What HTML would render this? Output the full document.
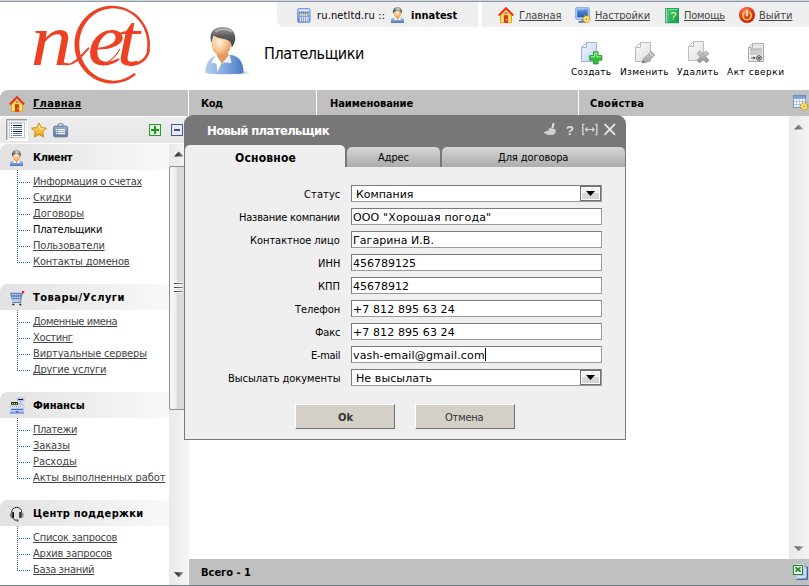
<!DOCTYPE html>
<html lang="ru">
<head>
<meta charset="utf-8">
<title>Плательщики</title>
<style>
*{box-sizing:border-box}
html,body{margin:0;padding:0}
header,nav,aside,main,footer,form,section{display:block;margin:0;padding:0}
body{width:809px;height:586px;overflow:hidden;background:#fff;position:relative;font-family:"DejaVu Sans Condensed","Liberation Sans",sans-serif;font-size:11px;color:#000}
.abs,.t,.ic{position:absolute}
.t{white-space:nowrap;line-height:20px;margin:0;font-weight:normal;text-decoration:none;display:block}
.t.b{font-weight:bold}
.t.v{font-family:"DejaVu Sans","Liberation Sans",sans-serif}
.t.u{text-decoration:underline;text-decoration-thickness:1px;text-underline-offset:1px;text-decoration-skip-ink:none}
.ic{display:block;overflow:visible}
#topline{left:0;top:0;width:809px;height:2px;background:linear-gradient(#c6d4ec 50%,#9a9a9a 50%)}
#topbar{left:277px;top:2px;width:532px;height:25px;background:#efefef;border-radius:0 0 0 7px}
#topgap{left:478px;top:2px;width:4px;height:25px;background:#fff}
#nav{left:0;top:90px;width:809px;height:26px;background:#c0c0c0;border-radius:8px 0 0 0}
.sep{position:absolute;top:90px;width:1px;height:26px;background:#fff}
#ltool{left:0;top:117px;width:189px;height:26px;background:linear-gradient(#eeeeee,#e6e6e6);border-radius:6px 0 0 0}
.sec{position:absolute;left:0;width:169px;height:26px;border-radius:7px 0 0 0;background:linear-gradient(90deg,#e2e2e2,#ededed 50%,#f9f9f9)}
.tree{position:absolute;left:17px;width:1px;background-image:repeating-linear-gradient(#1c5ea8 0 1px,transparent 1px 2px);background-size:1px 100%;background-repeat:no-repeat}
.br{position:absolute;left:19px;width:11px;height:1px;background-image:repeating-linear-gradient(90deg,#1c5ea8 0 1px,transparent 1px 2px)}
#lscroll{left:169px;top:144px;width:20px;height:441px;background:linear-gradient(90deg,#e9e9e9,#f5f5f5)}
#lthumb{left:169px;top:166px;width:18px;height:244px;border:1px solid #8e8e8e;border-radius:2px;background:linear-gradient(90deg,#f8f8f8,#ececec 40%,#d9d9d9 45%,#dcdcdc)}
#rscroll{left:789px;top:116px;width:20px;height:443px;background:linear-gradient(90deg,#e9e9e9,#f3f3f3)}
#foot{left:189px;top:559px;width:620px;height:26px;background:#c0c0c0}
#botline{left:0;top:585px;width:809px;height:1px;background:#6f7c8e}
#dlgtitle{left:184px;top:115px;width:442px;height:52px;background:#777;border-radius:9px 9px 0 0}
#dlgbody{left:184px;top:167px;width:442px;height:273px;background:#efefef;border:1px solid #7a7a7a;border-top:none}
.tab{position:absolute;top:147px;height:20px;border-radius:5px 5px 0 0;background:linear-gradient(#d6d6d6,#acacac)}
.tab.act{top:145px;height:23px;background:#efefef}
.inp{position:absolute;left:351px;width:251px;height:17px;background:#fff;border:1px solid #9a9a9a;border-top-color:#7b7b7b;border-left-color:#7b7b7b}
.sbtn{position:absolute;left:580px;width:21px;height:15px;border:1px solid #707070;box-shadow:inset 0 0 0 1px #fff;background:linear-gradient(#f2f2f2 50%,#d5d5d5 50%)}
.sbtn:after{content:"";position:absolute;left:5px;top:4px;width:9px;height:5px;background:#000;clip-path:polygon(0 0,100% 0,50% 100%)}
.btn{position:absolute;top:404px;width:100px;height:25px;background:#d4d0c8;border:1px solid #fff;border-right-color:#707070;border-bottom-color:#707070}
#caret{left:485px;top:348px;width:1px;height:13px;background:#000}
</style>
</head>
<body>
<div class="abs" id="topline"></div>
<div class="abs" id="topbar"></div>
<div class="abs" id="topgap"></div>
<svg class="ic" style="left:25px;top:0;width:135px;height:90px" viewBox="25 0 135 90" role="img" aria-label="net">
<path fill="#ee4023" d="M136.0,74.8 A37.75,38.85 0 1 1 148.7,54.7 L146.7,51.4 A34.05,36.15 0 1 0 134.2,73.0 Z"/>
<g font-family="'Liberation Serif',serif" font-style="italic" font-size="72" fill="#ee4023">
<text transform="translate(0,64.8) scale(1.16,1.02)" x="26.6 75.4 100.6" y="0">net</text>
<path d="M66,64.5 C73,64 80,56 88.5,47 L89.5,48.5 C82,57 76,65.5 66,65.5Z" stroke="none"/>
<path d="M148.6,50 C147.5,58 141,64.6 130,65" fill="none" stroke="#ee4023" stroke-width="2.6" stroke-linecap="round"/>
<path d="M108,62 C113,59 117,54 120,49" fill="none" stroke="#ee4023" stroke-width="1.1"/>
</g>
</svg>
<svg class="ic" style="left:195px;top:20px;width:65px;height:62px" viewBox="195 20 65 62">
<defs>
<linearGradient id="bu1" x1="0" y1="0" x2="1" y2="0"><stop offset="0" stop-color="#b4cbee"/><stop offset=".5" stop-color="#86a9e0"/><stop offset="1" stop-color="#4a7ac6"/></linearGradient>
<radialGradient id="bu2" cx=".4" cy=".4" r=".7"><stop offset="0" stop-color="#fff0dc"/><stop offset=".5" stop-color="#f8c89a"/><stop offset="1" stop-color="#e08c48"/></radialGradient>
<linearGradient id="bu3" x1="0" y1="0" x2="0" y2="1"><stop offset="0" stop-color="#a0a0a0"/><stop offset=".45" stop-color="#5c5c5c"/><stop offset="1" stop-color="#3a3a3a"/></linearGradient>
<radialGradient id="bu4"><stop offset="0" stop-color="#888" stop-opacity=".7"/><stop offset="1" stop-color="#888" stop-opacity="0"/></radialGradient>
</defs>
<ellipse cx="240" cy="72.5" rx="11" ry="2.5" fill="url(#bu4)"/>
<path d="M205.5,72 C205.5,62 211,56 219,55 L231,55 C239,56 243.5,62 243.5,72 C243.5,73.5 241,74.2 224.5,74.2 C208,74.2 205.5,73.5 205.5,72Z" fill="url(#bu1)"/>
<path d="M217,55 L221.5,64 L229,55 L226,50 L219,50Z" fill="#e59a58"/>
<path d="M216,55 L211,62.5 L216.5,63.5 L217.5,72 L221.5,63 Z" fill="#fff"/>
<path d="M229.5,54.5 L231.5,63 L224,62.5 L221.5,64 Z" fill="#f2f2f2"/>
<ellipse cx="221.3" cy="44.5" rx="9.6" ry="11" fill="url(#bu2)"/>
<path d="M211.6,43 C209,36 211,29 219,27.3 C228,25.5 235.5,30 235.3,38 C235.2,42 233.5,45.5 231.5,47.5 C231.8,43 230,40.5 226,39.5 C221,38.5 216,37.5 213.8,35.5 C212.5,38 212,40.5 211.6,43Z" fill="url(#bu3)"/>
<path d="M216,31.5 C220,28.5 227,28.5 231,31.5" stroke="#c8c8c8" stroke-width="1.6" fill="none" opacity=".7" stroke-linecap="round"/>
</svg>
<svg class="ic" style="left:581px;top:42px;width:23px;height:23px" viewBox="0 0 23 23"><defs><linearGradient id="pgc" x1="0" y1="0" x2="1" y2="1"><stop offset="0" stop-color="#f4f8ff"/><stop offset="1" stop-color="#bfd0ee"/></linearGradient></defs><path d="M5.5,.5 H15.5 V19.5 H.5 V5.5 Z" fill="url(#pgc)" stroke="#9db4dc"/><path d="M.5,5.5 H5.5 V.5 Z" fill="#fff" stroke="#9db4dc" stroke-linejoin="round"/><path d="M12.5,9.8 h4.6 v3.8 h3.8 v4.6 h-3.8 v3.8 h-4.6 v-3.8 h-3.8 v-4.6 h3.8 Z" fill="#38c038" stroke="#1f9a2a" stroke-width=".9"/><path d="M13.6,11 h2.2 v3.8 h3.9 M13.6,11 v3.8 h-3.8" fill="none" stroke="#b8f0b0" stroke-width="1"/></svg>
<svg class="ic" style="left:635px;top:42px;width:21px;height:21px" viewBox="0 0 21 21"><defs><linearGradient id="pge" x1="0" y1="0" x2="1" y2="1"><stop offset="0" stop-color="#fbfbfb"/><stop offset="1" stop-color="#dcdcdc"/></linearGradient></defs><path d="M5.5,.5 H15.5 V19.5 H.5 V5.5 Z" fill="url(#pge)" stroke="#bababa"/><path d="M.5,5.5 H5.5 V.5 Z" fill="#fff" stroke="#bababa" stroke-linejoin="round"/><defs><linearGradient id="peg" x1="0" y1="0" x2="1" y2="1"><stop offset="0" stop-color="#d8d8d8"/><stop offset="1" stop-color="#9a9a9a"/></linearGradient></defs><path d="M16.4,9.8 L19.8,13 L11.6,20.4 L7,21 L8.2,17 Z" fill="url(#peg)" stroke="#8e8e8e" stroke-width=".8"/><path d="M15,11.2 L18.2,14.4" stroke="#f0f0f0" stroke-width="1"/><path d="M10,15.6 L13,18.6" stroke="#8a8a8a" stroke-width=".7"/><path d="M8.2,19 L9.4,20.2" stroke="#555" stroke-width="1.3"/></svg>
<svg class="ic" style="left:688px;top:41px;width:23px;height:23px" viewBox="0 0 23 23"><defs><linearGradient id="pgd" x1="0" y1="0" x2="1" y2="1"><stop offset="0" stop-color="#fbfbfb"/><stop offset="1" stop-color="#dedede"/></linearGradient></defs><path d="M5.5,.5 H15.5 V19.5 H.5 V5.5 Z" fill="url(#pgd)" stroke="#bdbdbd"/><path d="M.5,5.5 H5.5 V.5 Z" fill="#fff" stroke="#bdbdbd" stroke-linejoin="round"/><defs><linearGradient id="dxg" x1="0" y1="0" x2="0" y2="1"><stop offset="0" stop-color="#cfcfcf"/><stop offset="1" stop-color="#8c8c8c"/></linearGradient></defs><path d="M9.4,12.2 L11.8,10 L15,13.2 L18.2,10 L20.8,12.4 L17.6,15.8 L21,19.2 L18.4,21.8 L15,18.4 L11.6,22 L9,19.4 L12.4,15.8 Z" fill="url(#dxg)" stroke="#909090" stroke-width=".8"/></svg>
<svg class="ic" style="left:747px;top:42px;width:18px;height:21px" viewBox="0 0 18 21"><defs><linearGradient id="pga" x1="0" y1="0" x2="1" y2="1"><stop offset="0" stop-color="#f8f8f8"/><stop offset="1" stop-color="#e0e0e0"/></linearGradient></defs><path d="M5.5,1.5 H16.5 V19.5 H1.5 V5.5 Z" fill="url(#pga)" stroke="#ababab"/><path d="M1.5,5.5 H5.5 V1.5 Z" fill="#fff" stroke="#ababab" stroke-linejoin="round"/><rect x="3" y="5.6" width="12" height="7.4" fill="#cdcdcd"/><path d="M3,7.4 H15" stroke="#b4b4b4" stroke-width=".9"/><path d="M6,3.4 H15" stroke="#d0d0d0" stroke-width=".9"/><circle cx="12" cy="16" r="2.3" fill="#f4f4f4" stroke="#3a3a3a" stroke-width="1"/><path d="M11,15 l2,2 m0,-2 l-2,2" stroke="#3a3a3a" stroke-width=".8"/><path d="M4,16 h4.6 m-1.6,-1.4 v2.8" stroke="#4a4a4a" stroke-width="1"/></svg>
<svg class="ic" style="left:498px;top:7px;width:16px;height:17px" viewBox="0 0 16 17"><path d="M2.5,8 L8,2.4 L13.5,8 V15.6 H2.5 Z" fill="#ffd634" stroke="#eaa41c" stroke-width="1"/><path d="M4.2,8.6 v6.4 M11.8,8.6 v6.4" stroke="#fff3a8" stroke-width="1"/><rect x="6" y="8.2" width="4" height="7.6" fill="#d23c28"/><rect x="8.3" y="12" width="1" height="1.2" fill="#ffe8b0"/><ellipse cx="8" cy="6" rx="1.6" ry="1" fill="#5a96f0"/><path d="M.8,8.5 L8,1.1 L15.2,8.5" fill="none" stroke="#f22a1c" stroke-width="1.9" stroke-linejoin="miter"/></svg>
<svg class="ic" style="left:297px;top:8px;width:14px;height:15px" viewBox="0 0 14 15"><defs><linearGradient id="sv" x1="0" y1="0" x2="0" y2="1"><stop offset="0" stop-color="#b8cdf0"/><stop offset="1" stop-color="#5f83c4"/></linearGradient></defs><rect x=".5" y=".5" width="12.6" height="14" rx="1.6" fill="url(#sv)" stroke="#7d9bd4"/><rect x="1.8" y="1.8" width="10" height="1.6" fill="#e8f0ff"/><path d="M2.6,3.6 v1.6 M4.6,3.6 v1.6 M6.6,3.6 v1.6 M8.6,3.6 v1.6 M10.6,3.6 v1.6" stroke="#3f62a8" stroke-width="1"/><path d="M3,7 h1.2 M5,7 h1.2 M7,7 h1.2 M9,7 h1.2" stroke="#fff060" stroke-width="1.3"/><path d="M3.3,9 v4.6 M5.3,9 v4.6 M7.3,9 v4.6 M9.3,9 v4.6 M11,9 v4.6" stroke="#eef4ff" stroke-width="1"/></svg>
<svg class="ic" style="left:391px;top:7px;width:13px;height:16px" viewBox="0 0 13 16"><defs><radialGradient id="u1a" cx=".45" cy=".35" r=".75"><stop offset="0" stop-color="#fff2dc"/><stop offset=".55" stop-color="#f8bc7c"/><stop offset="1" stop-color="#e48a38"/></radialGradient><radialGradient id="u1b" cx=".55" cy=".3" r=".6"><stop offset="0" stop-color="#e6e6e6"/><stop offset=".5" stop-color="#8a8a8a"/><stop offset="1" stop-color="#444"/></radialGradient><linearGradient id="u1c" x1="0" y1="0" x2="0" y2="1"><stop offset="0" stop-color="#a4beea"/><stop offset="1" stop-color="#5e88cc"/></linearGradient></defs><path d="M0,16 V12.2 L3.2,10.4 H9.8 L13,12.2 V16 Z" fill="url(#u1c)"/><path d="M0,15.3 H13" stroke="#4c7ac6" stroke-width="1.2"/><path d="M3.4,10.4 H9.6 V13 H3.4 Z" fill="#fff"/><path d="M4.6,9.6 L6.5,13.6 L8.4,9.6 Z" fill="#ea9448"/><path d="M6.5,1.6 C9.2,1.6 10.4,4 10.2,6.6 C10,9 8.2,11.2 6.5,11.2 C4.8,11.2 3,9 2.8,6.6 C2.6,4 3.8,1.6 6.5,1.6Z" fill="url(#u1a)"/><path d="M2.4,6.8 C1.2,2.8 3.2,0 6.5,0 C9.8,0 11.8,2.8 10.6,6.8 C10.2,4.8 9,4 6.5,4 C4,4 2.8,4.8 2.4,6.8Z" fill="url(#u1b)"/></svg>
<svg class="ic" style="left:575px;top:7px;width:17px;height:17px" viewBox="0 0 17 17"><defs><linearGradient id="mn" x1="0" y1="0" x2="0" y2="1"><stop offset="0" stop-color="#5f96e0"/><stop offset="1" stop-color="#2456a8"/></linearGradient></defs><rect x=".5" y=".5" width="14" height="12" rx="1.8" fill="#acc8f0" stroke="#8cb0e8"/><rect x="2.2" y="2.2" width="10.6" height="8" fill="url(#mn)"/><path d="M2.6,2.8 H9" stroke="#9cc0f4" stroke-width=".8"/><path d="M3.5,14.9 h7.5" stroke="#3a6cbc" stroke-width="1.6"/><path d="M6,12.8 h3 v1.6 h-3z" fill="#5f8cd0"/><circle cx="11.5" cy="12" r="3.5" fill="none" stroke="#d88c14" stroke-width="1.6" stroke-dasharray="1.5 1.25"/><circle cx="11.5" cy="12" r="3.1" fill="#f2dc30"/><circle cx="11.5" cy="12" r="1.9" fill="#fff6b8"/><circle cx="11.5" cy="12" r=".9" fill="#e0641c"/></svg>
<svg class="ic" style="left:665px;top:8px;width:15px;height:16px" viewBox="0 0 15 16"><defs><linearGradient id="hp" x1="0" y1="0" x2="1" y2="1"><stop offset="0" stop-color="#3cc878"/><stop offset="1" stop-color="#1a9a50"/></linearGradient></defs><rect x="0" y="0" width="14" height="15.2" fill="#18a050"/><rect x="3.4" y="1" width="9.8" height="13.2" fill="url(#hp)"/><path d="M1.4,.6 v14" stroke="#9ee8b8" stroke-width="1.2"/><path d="M3,1 v13.4" stroke="#e8d8a0" stroke-width=".6"/><path d="M3.6,1.4 h9.4" stroke="#8fe0b0" stroke-width=".8"/><text x="8.3" y="11.6" font-family="'Liberation Sans',sans-serif" font-size="10.5" fill="#fff8a0" text-anchor="middle">?</text></svg>
<svg class="ic" style="left:739px;top:7px;width:16px;height:16px" viewBox="0 0 16 16"><defs><radialGradient id="ex" cx=".4" cy=".3" r=".8"><stop offset="0" stop-color="#ff8a60"/><stop offset=".5" stop-color="#e83820"/><stop offset="1" stop-color="#b81808"/></radialGradient></defs><circle cx="8" cy="8" r="8" fill="url(#ex)"/><path d="M5.6,5 A4.3,4.3 0 1 0 10.4,5" fill="none" stroke="#ffe060" stroke-width="1.4" stroke-linecap="round"/><path d="M8,3 V8.4" stroke="#fff4c0" stroke-width="1.5" stroke-linecap="round"/></svg>
<header id="top">
<span class="t" style="left:317px;top:6px;font-size:11px;letter-spacing:0.15px;">ru.netltd.ru ::</span>
<span class="t b" style="left:411px;top:6px;font-size:11px;">innatest</span>
<a class="t u" style="left:519px;top:6px;font-size:11px;letter-spacing:-0.05px;color:#444;">Главная</a>
<a class="t u" style="left:595px;top:6px;font-size:11px;letter-spacing:-0.1px;color:#444;">Настройки</a>
<a class="t u" style="left:684px;top:6px;font-size:11px;letter-spacing:-0.2px;color:#444;">Помощь</a>
<a class="t u" style="left:759px;top:6px;font-size:11px;letter-spacing:0.05px;color:#444;">Выйти</a>
</header>
<h1 class="t" style="left:264px;top:44px;font-size:16px;letter-spacing:-0.45px;">Плательщики</h1>
<nav id="tool">
<span class="t v" style="left:571px;top:62px;font-size:9px;letter-spacing:0.2px;">Создать</span>
<span class="t v" style="left:620px;top:62px;font-size:9px;letter-spacing:0.35px;">Изменить</span>
<span class="t v" style="left:677px;top:62px;font-size:9px;letter-spacing:0.35px;">Удалить</span>
<span class="t v" style="left:727px;top:62px;font-size:9px;letter-spacing:0.5px;">Акт сверки</span>
</nav>
<div class="abs" id="nav"></div>
<div class="sep" style="left:188px"></div>
<div class="sep" style="left:316px"></div>
<div class="sep" style="left:578px"></div>
<nav id="navt">
<a class="t b u" style="left:33px;top:94px;font-size:11px;letter-spacing:0.3px;">Главная</a>
<span class="t b" style="left:201px;top:94px;font-size:11px;letter-spacing:-0.45px;">Код</span>
<span class="t b" style="left:330px;top:94px;font-size:11px;letter-spacing:-0.05px;">Наименование</span>
<span class="t b" style="left:590px;top:94px;font-size:11px;letter-spacing:0.3px;">Свойства</span>
</nav>
<svg class="ic" style="left:9px;top:96px;width:16px;height:17px" viewBox="0 0 16 17"><path d="M2.5,8 L8,2.4 L13.5,8 V15.6 H2.5 Z" fill="#ffd634" stroke="#eaa41c" stroke-width="1"/><path d="M4.2,8.6 v6.4 M11.8,8.6 v6.4" stroke="#fff3a8" stroke-width="1"/><rect x="6" y="8.2" width="4" height="7.6" fill="#d23c28"/><rect x="8.3" y="12" width="1" height="1.2" fill="#ffe8b0"/><ellipse cx="8" cy="6" rx="1.6" ry="1" fill="#5a96f0"/><path d="M.8,8.5 L8,1.1 L15.2,8.5" fill="none" stroke="#f22a1c" stroke-width="1.9" stroke-linejoin="miter"/></svg>
<svg class="ic" style="left:793px;top:95px;width:16px;height:16px" viewBox="0 0 16 16"><rect x="0" y="0" width="13" height="13" fill="#5a80c8"/><rect x=".6" y=".6" width="11.8" height="2.6" fill="#7d9eda"/><rect x=".7" y="3.4" width="11.6" height="9" fill="#a9c0ea"/><rect x="1.1" y="3.9" width="2.1" height="2.1" fill="#fff"/><rect x="4.1" y="3.9" width="2.1" height="2.1" fill="#fff"/><rect x="7.1" y="3.9" width="2.1" height="2.1" fill="#fff"/><rect x="10.1" y="3.9" width="2.1" height="2.1" fill="#fff"/><rect x="1.1" y="6.9" width="2.1" height="2.1" fill="#fff"/><rect x="4.1" y="6.9" width="2.1" height="2.1" fill="#fff"/><rect x="7.1" y="6.9" width="2.1" height="2.1" fill="#fff"/><rect x="10.1" y="6.9" width="2.1" height="2.1" fill="#fff"/><rect x="1.1" y="9.9" width="2.1" height="2.1" fill="#fff"/><rect x="4.1" y="9.9" width="2.1" height="2.1" fill="#fff"/><rect x="7.1" y="9.9" width="2.1" height="2.1" fill="#fff"/><rect x="10.1" y="9.9" width="2.1" height="2.1" fill="#fff"/><circle cx="11.2" cy="11.5" r="3.5" fill="none" stroke="#d88c14" stroke-width="1.6" stroke-dasharray="1.5 1.25"/><circle cx="11.2" cy="11.5" r="3.1" fill="#f2dc30"/><circle cx="11.2" cy="11.5" r="1.9" fill="#fff6b8"/><circle cx="11.2" cy="11.5" r=".9" fill="#e0641c"/></svg>
<div class="abs" id="ltool"></div>
<svg class="ic" style="left:6px;top:119px;width:22px;height:22px" viewBox="0 0 22 22"><rect x="0" y="0" width="22" height="22" fill="#f4f4f4"/><path d="M.5,22 V.5 H22" fill="none" stroke="#9a9a9a"/><path d="M1.5,21 V1.5 H21" fill="none" stroke="#d0d0d0"/><path d="M0,21.5 H21.5 V0" fill="none" stroke="#fff"/><rect x="3.5" y="3.5" width="15" height="15" fill="#fff" stroke="#c8c8c8"/><path d="M7,4.5 h9 M7,18.5 h9" stroke="#b4c6e4" stroke-width="1"/><path d="M7,6.5 h9 M7,12.5 h9" stroke="#111" stroke-width="1.2"/><path d="M7,8.5 h9 M7,10.5 h9 M7,14.5 h9 M7,16.5 h9" stroke="#5a80c4" stroke-width="1"/><path d="M5.5,4 v15" stroke="#4a70b8" stroke-width="1" stroke-dasharray="1 1"/></svg>
<svg class="ic" style="left:31px;top:122px;width:16px;height:16px" viewBox="0 0 16 16"><defs><linearGradient id="st" x1="0" y1="0" x2="0" y2="1"><stop offset="0" stop-color="#ffe27a"/><stop offset="1" stop-color="#f0a018"/></linearGradient></defs><path d="M8,.8 L10.2,5.6 L15.4,6.2 L11.6,9.8 L12.6,15 L8,12.4 L3.4,15 L4.4,9.8 L.6,6.2 L5.8,5.6 Z" fill="url(#st)" stroke="#c88a10" stroke-width="1" stroke-linejoin="round"/><path d="M8,3.4 L9.4,6.6 L12.8,7 " fill="none" stroke="#fff4c0" stroke-width=".8"/></svg>
<svg class="ic" style="left:53px;top:123px;width:16px;height:15px" viewBox="0 0 16 15"><defs><linearGradient id="bf" x1="0" y1="0" x2="0" y2="1"><stop offset="0" stop-color="#9fb2cc"/><stop offset=".5" stop-color="#7e96b6"/><stop offset="1" stop-color="#5d7696"/></linearGradient></defs><path d="M5.2,3.4 V1.8 Q5.2,.7 6.2,.7 H9 Q10,.7 10,1.8 V3.4" fill="none" stroke="#6a7f9c" stroke-width="1.1"/><rect x=".6" y="3.2" width="14" height="10.6" rx="1.4" fill="url(#bf)" stroke="#5f7896"/><path d="M5,6.6 h7 M5,8.6 h7 M5,10.6 h7" stroke="#f2f5fa" stroke-width="1.1"/><path d="M3,6.6 h1.2 M3,8.6 h1.2 M3,10.6 h1.2" stroke="#f2f5fa" stroke-width="1.1"/></svg>
<svg class="ic" style="left:149px;top:124px;width:12px;height:12px" viewBox="0 0 12 12"><rect x=".5" y=".5" width="11" height="11" fill="none" stroke="#1ea41e" stroke-width="1"/><path d="M6,2 v8 M2,6 h8" stroke="#12a012" stroke-width="2"/></svg>
<svg class="ic" style="left:171px;top:124px;width:12px;height:12px" viewBox="0 0 12 12"><rect x=".5" y=".5" width="11" height="11" fill="none" stroke="#3a5ca8" stroke-width="1"/><path d="M3,6 h6" stroke="#2f52a4" stroke-width="2"/></svg>
<aside id="menu">
<div class="sec" style="top:144px"></div>
<div class="tree" style="top:170px;height:93px"></div>
<div class="br" style="top:182px"></div>
<div class="br" style="top:198px"></div>
<div class="br" style="top:214px"></div>
<div class="br" style="top:230px"></div>
<div class="br" style="top:246px"></div>
<div class="br" style="top:262px"></div>
<div class="sec" style="top:284px"></div>
<div class="tree" style="top:310px;height:61px"></div>
<div class="br" style="top:322px"></div>
<div class="br" style="top:338px"></div>
<div class="br" style="top:354px"></div>
<div class="br" style="top:370px"></div>
<div class="sec" style="top:392px"></div>
<div class="tree" style="top:418px;height:61px"></div>
<div class="br" style="top:430px"></div>
<div class="br" style="top:446px"></div>
<div class="br" style="top:462px"></div>
<div class="br" style="top:478px"></div>
<div class="sec" style="top:500px"></div>
<div class="tree" style="top:526px;height:45px"></div>
<div class="br" style="top:538px"></div>
<div class="br" style="top:554px"></div>
<div class="br" style="top:570px"></div>
<svg class="ic" style="left:10px;top:150px;width:13px;height:16px" viewBox="0 0 13 16"><defs><radialGradient id="u2a" cx=".45" cy=".35" r=".75"><stop offset="0" stop-color="#fff2dc"/><stop offset=".55" stop-color="#f8bc7c"/><stop offset="1" stop-color="#e48a38"/></radialGradient><radialGradient id="u2b" cx=".55" cy=".3" r=".6"><stop offset="0" stop-color="#e6e6e6"/><stop offset=".5" stop-color="#8a8a8a"/><stop offset="1" stop-color="#444"/></radialGradient><linearGradient id="u2c" x1="0" y1="0" x2="0" y2="1"><stop offset="0" stop-color="#a4beea"/><stop offset="1" stop-color="#5e88cc"/></linearGradient></defs><path d="M0,16 V12.2 L3.2,10.4 H9.8 L13,12.2 V16 Z" fill="url(#u2c)"/><path d="M0,15.3 H13" stroke="#4c7ac6" stroke-width="1.2"/><path d="M3.4,10.4 H9.6 V13 H3.4 Z" fill="#fff"/><path d="M4.6,9.6 L6.5,13.6 L8.4,9.6 Z" fill="#ea9448"/><path d="M6.5,1.6 C9.2,1.6 10.4,4 10.2,6.6 C10,9 8.2,11.2 6.5,11.2 C4.8,11.2 3,9 2.8,6.6 C2.6,4 3.8,1.6 6.5,1.6Z" fill="url(#u2a)"/><path d="M2.4,6.8 C1.2,2.8 3.2,0 6.5,0 C9.8,0 11.8,2.8 10.6,6.8 C10.2,4.8 9,4 6.5,4 C4,4 2.8,4.8 2.4,6.8Z" fill="url(#u2b)"/></svg>
<svg class="ic" style="left:10px;top:290px;width:15px;height:16px" viewBox="0 0 15 16"><path d="M0,2.8 H13 L11.2,10.4 H2 Z" fill="#6686be"/><path d="M2,4.6 H11.4 M2.2,7.4 H10.8" stroke="#eef2fa" stroke-width="1" stroke-dasharray="1.3 1"/><path d="M2.6,9.9 H10.6" stroke="#eef2fa" stroke-width=".9"/><path d="M2.2,12.4 H11" stroke="#5f80ba" stroke-width="1.3"/><path d="M10.6,10 V12.4" stroke="#5f80ba" stroke-width="1"/><rect x="2.2" y="13.8" width="2.2" height="1.5" fill="#333"/><rect x="9.2" y="13.8" width="2.2" height="1.5" fill="#333"/><rect x="12" y="1" width="2.2" height="2.2" fill="#e02424"/></svg>
<svg class="ic" style="left:10px;top:398px;width:15px;height:16px" viewBox="0 0 15 16"><defs><linearGradient id="rg" x1="0" y1="0" x2="0" y2="1"><stop offset="0" stop-color="#b4caf2"/><stop offset="1" stop-color="#6a8ed4"/></linearGradient></defs><rect x="7.2" y="0" width="6.8" height="3" fill="#bcd0f4" stroke="#9ab6ea" stroke-width=".6"/><rect x="8.2" y="1" width="4.8" height="1" fill="#111"/><rect x="10" y="3" width="1.2" height="2.2" fill="#9ab6ea"/><rect x="8" y="5" width="5.4" height="2.2" fill="#b8ccf0"/><rect x="1" y="4" width="7" height="3" rx=".4" fill="#111"/><circle cx="2.6" cy="5.5" r=".7" fill="#f4e83c"/><circle cx="4.5" cy="5.5" r=".7" fill="#f4e83c"/><circle cx="6.4" cy="5.5" r=".7" fill="#f4e83c"/><rect x=".3" y="7" width="13.6" height="4" rx=".6" fill="#e9f0fd" stroke="#9fb8ea" stroke-width=".7"/><path d="M2,8.7 h10.4" stroke="#6f8fcc" stroke-width="1.1" stroke-dasharray="1 1"/><rect x="1.2" y="10.9" width="11.8" height="1.1" fill="#3c60b0"/><rect x="0" y="12.3" width="14" height="3.4" fill="url(#rg)"/><rect x="6" y="13.1" width="2.2" height="1.3" fill="#3a5cac"/><path d="M.4,12.8 H5.6 M8.6,12.8 H13.6" stroke="#d4e0f8" stroke-width=".6"/></svg>
<svg class="ic" style="left:9px;top:505px;width:17px;height:18px" viewBox="0 0 17 18"><defs><linearGradient id="hs1" x1="0" y1="0" x2="1" y2="0"><stop offset="0" stop-color="#c8c8c8"/><stop offset="1" stop-color="#3a3a3a"/></linearGradient><linearGradient id="hs2" x1="0" y1="0" x2="1" y2="0"><stop offset="0" stop-color="#4a4040"/><stop offset="1" stop-color="#c8c0c0"/></linearGradient></defs><path d="M2.6,7.4 A5.1,5.1 0 0 1 12.8,7.4" fill="none" stroke="#2a2a2a" stroke-width="1"/><path d="M3.8,7 C1.4,7 .4,8.4 .4,9.9 C.4,11.4 1.4,12.8 3.8,12.8 Z" fill="url(#hs1)"/><rect x="3.5" y="6.9" width="1.5" height="6" rx=".5" fill="#111"/><path d="M11.6,7 C14,7 15,8.4 15,9.9 C15,11.4 14,12.8 11.6,12.8 Z" fill="url(#hs2)"/><rect x="10.3" y="6.9" width="1.5" height="6" rx=".5" fill="#111"/><path d="M3.4,12.6 Q4.6,15.2 7.4,15.4" fill="none" stroke="#333" stroke-width="1"/><circle cx="8.4" cy="15.4" r="1.4" fill="#7a7474"/></svg>
<b class="t b" style="left:33px;top:148px;font-size:11px;letter-spacing:-0.4px;">Клиент</b>
<a class="t u" style="left:33px;top:172px;font-size:11px;letter-spacing:-0.3px;color:#444;">Информация о счетах</a>
<a class="t u" style="left:33px;top:188px;font-size:11px;letter-spacing:-0.05px;color:#444;">Скидки</a>
<a class="t u" style="left:33px;top:204px;font-size:11px;color:#444;">Договоры</a>
<span class="t" style="left:33px;top:220px;font-size:11px;letter-spacing:-0.25px;">Плательщики</span>
<a class="t u" style="left:33px;top:236px;font-size:11px;letter-spacing:-0.15px;color:#444;">Пользователи</a>
<a class="t u" style="left:33px;top:252px;font-size:11px;letter-spacing:-0.15px;color:#444;">Контакты доменов</a>
<b class="t b" style="left:33px;top:288px;font-size:11px;letter-spacing:0.5px;">Товары/Услуги</b>
<a class="t u" style="left:33px;top:312px;font-size:11px;letter-spacing:-0.4px;color:#444;">Доменные имена</a>
<a class="t u" style="left:33px;top:328px;font-size:11px;letter-spacing:-0.35px;color:#444;">Хостинг</a>
<a class="t u" style="left:33px;top:344px;font-size:11px;letter-spacing:-0.15px;color:#444;">Виртуальные серверы</a>
<a class="t u" style="left:33px;top:360px;font-size:11px;letter-spacing:-0.2px;color:#444;">Другие услуги</a>
<b class="t b" style="left:33px;top:396px;font-size:11px;letter-spacing:-0.05px;">Финансы</b>
<a class="t u" style="left:33px;top:420px;font-size:11px;letter-spacing:-0.45px;color:#444;">Платежи</a>
<a class="t u" style="left:33px;top:436px;font-size:11px;letter-spacing:-0.1px;color:#444;">Заказы</a>
<a class="t u" style="left:33px;top:452px;font-size:11px;letter-spacing:-0.05px;color:#444;">Расходы</a>
<a class="t u" style="left:33px;top:468px;font-size:11px;letter-spacing:-0.1px;color:#444;">Акты выполненных работ</a>
<b class="t b" style="left:33px;top:504px;font-size:11px;letter-spacing:0.3px;">Центр поддержки</b>
<a class="t u" style="left:33px;top:528px;font-size:11px;letter-spacing:-0.25px;color:#444;">Список запросов</a>
<a class="t u" style="left:33px;top:544px;font-size:11px;letter-spacing:-0.2px;color:#444;">Архив запросов</a>
<a class="t u" style="left:33px;top:560px;font-size:11px;letter-spacing:-0.3px;color:#444;">База знаний</a>
</aside>
<div class="abs" id="lscroll"></div>
<div class="abs" id="lthumb"></div>
<div class="abs" id="rscroll"></div>
<svg class="ic" style="left:174px;top:151px;width:10px;height:6px" viewBox="0 0 10 6"><defs><linearGradient id="a1" x1="0" y1="0" x2="1" y2="0"><stop offset="0" stop-color="#111"/><stop offset="1" stop-color="#8a8a8a"/></linearGradient></defs><path d="M0,5.5 L4.75,.6 L9.5,5.5 Z" fill="url(#a1)"/></svg>
<svg class="ic" style="left:174px;top:572px;width:10px;height:6px" viewBox="0 0 10 6"><defs><linearGradient id="a2" x1="0" y1="0" x2="1" y2="0"><stop offset="0" stop-color="#111"/><stop offset="1" stop-color="#8a8a8a"/></linearGradient></defs><path d="M0,.2 H9.5 L4.75,5.2 Z" fill="url(#a2)"/></svg>
<svg class="ic" style="left:174px;top:282px;width:9px;height:12px" viewBox="0 0 9 12"><defs><linearGradient id="gp" x1="0" y1="0" x2="1" y2="0"><stop offset="0" stop-color="#333"/><stop offset="1" stop-color="#888"/></linearGradient></defs><path d="M0,.5 h9 M0,2.5 h9 M0,4.5 h9 M0,6.5 h9 M0,8.5 h9 M0,10.5 h9" stroke="#fff" stroke-width="1" opacity=".8"/><rect x="0" y="1" width="9" height="1" fill="url(#gp)"/><rect x="0" y="5" width="9" height="1" fill="url(#gp)"/><rect x="0" y="9" width="9" height="1" fill="url(#gp)"/></svg>
<svg class="ic" style="left:794px;top:124px;width:10px;height:6px" viewBox="0 0 10 6"><defs><linearGradient id="a3" x1="0" y1="0" x2="1" y2="0"><stop offset="0" stop-color="#5a5a5a"/><stop offset="1" stop-color="#a4a4a4"/></linearGradient></defs><path d="M0,5.5 L4.75,.6 L9.5,5.5 Z" fill="url(#a3)"/></svg>
<svg class="ic" style="left:794px;top:546px;width:10px;height:6px" viewBox="0 0 10 6"><defs><linearGradient id="a4" x1="0" y1="0" x2="1" y2="0"><stop offset="0" stop-color="#5a5a5a"/><stop offset="1" stop-color="#a4a4a4"/></linearGradient></defs><path d="M0,.2 H9.5 L4.75,5.2 Z" fill="url(#a4)"/></svg>
<div class="abs" id="foot"></div>
<svg class="ic" style="left:792px;top:563px;width:17px;height:18px" viewBox="0 0 17 18"><defs><linearGradient id="xl" x1="0" y1="0" x2="1" y2="1"><stop offset="0" stop-color="#eef3fd"/><stop offset="1" stop-color="#8fb0ea"/></linearGradient></defs><path d="M4.4,1.2 H13.2 L15.6,3.6 V16.6 H4.4 Z" fill="url(#xl)"/><path d="M15.3,3.8 V16.3 H4.6" fill="none" stroke="#2c4c8c" stroke-width="1"/><path d="M13.2,1.2 V3.8 H15.6" fill="#fff" stroke="#3a5a9a" stroke-width=".7"/><path d="M6,14 H13 V5.6" fill="none" stroke="#f4f8ff" stroke-width=".9"/><rect x="1.5" y="2.5" width="9" height="9" fill="#fff" stroke="#2f842f" stroke-width="1.1"/><path d="M3.4,4.2 L8.6,8.8 M8.6,4.2 L3.4,8.8" stroke="#2f9a2f" stroke-width="2"/><path d="M4,4.4 L8.2,8.2" stroke="#1c6c1c" stroke-width=".7"/></svg>
<b class="t b" style="left:201px;top:563px;font-size:11px;">Всего - 1</b>
<div class="abs" id="botline"></div>
<form id="dlg" role="dialog" aria-label="Новый плательщик">
<div class="abs" id="dlgtitle"></div>
<div class="abs" id="dlgbody"></div>
<svg class="ic" style="left:543px;top:122px;width:14px;height:14px" viewBox="0 0 14 14"><path d="M9.6,.8 L11.6,1.4 L10.4,6.4 L8.4,6 Z" fill="#e2e2e2"/><path d="M6.6,6 L12.4,7.6 L13,10 L5.6,8.4 Z" fill="#d8d8d8"/><path d="M.4,10.6 L5.6,8.2 L12.8,10 L11,12.8 L5,13 L2.4,11.6 Z" fill="#d2d2d2"/></svg>
<svg class="ic" style="left:565px;top:122px;width:10px;height:15px" viewBox="0 0 10 15"><text x="4.9" y="13" font-family="'Liberation Sans',sans-serif" font-weight="bold" font-size="13.5" fill="#dedede" text-anchor="middle">?</text></svg>
<svg class="ic" style="left:581px;top:123px;width:18px;height:13px" viewBox="0 0 18 13"><path d="M3.4,1.4 H1.8 V11.6 H3.4 M14.2,1.4 H15.8 V11.6 H14.2" fill="none" stroke="#d4d4d4" stroke-width="1.4"/><path d="M4.4,6.5 H13.2 M6.4,4.5 L4.4,6.5 L6.4,8.5 M11.2,4.5 L13.2,6.5 L11.2,8.5" fill="none" stroke="#d4d4d4" stroke-width="1.1"/></svg>
<svg class="ic" style="left:603px;top:123px;width:14px;height:13px" viewBox="0 0 14 13"><path d="M2,1.4 L11.6,11.4 M11.6,1.4 L2,11.4" stroke="#e8e8e8" stroke-width="1.7" stroke-linecap="round"/></svg>
<div class="tab act" style="left:185px;width:160px"></div>
<div class="tab" style="left:347px;width:93px"></div>
<div class="tab" style="left:442px;width:183px"></div>
<div class="inp" style="top:185px"></div><div class="sbtn" style="top:186px"></div>
<div class="inp" style="top:208px"></div>
<div class="inp" style="top:231px"></div>
<div class="inp" style="top:254px"></div>
<div class="inp" style="top:277px"></div>
<div class="inp" style="top:300px"></div>
<div class="inp" style="top:323px"></div>
<div class="inp" style="top:346px"></div>
<div class="inp" style="top:369px"></div><div class="sbtn" style="top:370px"></div>
<div class="abs" id="caret"></div>
<div class="btn" style="left:295px"></div>
<div class="btn" style="left:415px"></div>
<b class="t b" style="left:207px;top:121px;font-size:13px;letter-spacing:-0.65px;color:#fff;">Новый плательщик</b>
<span class="t b" style="left:235px;top:148px;font-size:12px;letter-spacing:0.2px;">Основное</span>
<span class="t" style="left:378px;top:148px;font-size:11px;letter-spacing:-0.1px;">Адрес</span>
<span class="t" style="left:498px;top:148px;font-size:11px;letter-spacing:-0.1px;">Для договора</span>
<label class="t" style="left:304px;top:185px;font-size:11px;letter-spacing:0.1px;">Статус</label>
<label class="t" style="left:239px;top:208px;font-size:11px;letter-spacing:-0.2px;">Название компании</label>
<label class="t" style="left:250px;top:231px;font-size:11px;letter-spacing:-0.05px;">Контактное лицо</label>
<label class="t" style="left:318px;top:254px;font-size:11px;letter-spacing:0.05px;">ИНН</label>
<label class="t" style="left:318px;top:277px;font-size:11px;letter-spacing:0.05px;">КПП</label>
<label class="t" style="left:295px;top:300px;font-size:11px;letter-spacing:-0.05px;">Телефон</label>
<label class="t" style="left:315px;top:323px;font-size:11px;letter-spacing:-0.15px;">Факс</label>
<label class="t" style="left:311px;top:346px;font-size:11px;letter-spacing:-0.3px;">E-mail</label>
<label class="t" style="left:228px;top:369px;font-size:11px;letter-spacing:-0.05px;">Высылать документы</label>
<span class="t v" style="left:356px;top:185px;font-size:11px;letter-spacing:-0.05px;">Компания</span>
<span class="t v" style="left:353px;top:208px;font-size:11px;letter-spacing:0.15px;">ООО "Хорошая погода"</span>
<span class="t v" style="left:353px;top:231px;font-size:11px;letter-spacing:0.05px;">Гагарина И.В.</span>
<span class="t v" style="left:353px;top:254px;font-size:11px;">456789125</span>
<span class="t v" style="left:353px;top:277px;font-size:11px;">45678912</span>
<span class="t v" style="left:353px;top:300px;font-size:11px;letter-spacing:0.1px;">+7 812 895 63 24</span>
<span class="t v" style="left:353px;top:323px;font-size:11px;letter-spacing:0.1px;">+7 812 895 63 24</span>
<span class="t v" style="left:353px;top:346px;font-size:11px;letter-spacing:0.15px;">vash-email@gmail.com</span>
<span class="t v" style="left:356px;top:369px;font-size:11px;letter-spacing:0.1px;">Не высылать</span>
<span class="t b" style="left:338px;top:408px;font-size:11px;letter-spacing:0.1px;color:#333;">Ok</span>
<span class="t" style="left:445px;top:408px;font-size:11px;letter-spacing:-0.2px;color:#333;">Отмена</span>
</form>
</body>
</html>
